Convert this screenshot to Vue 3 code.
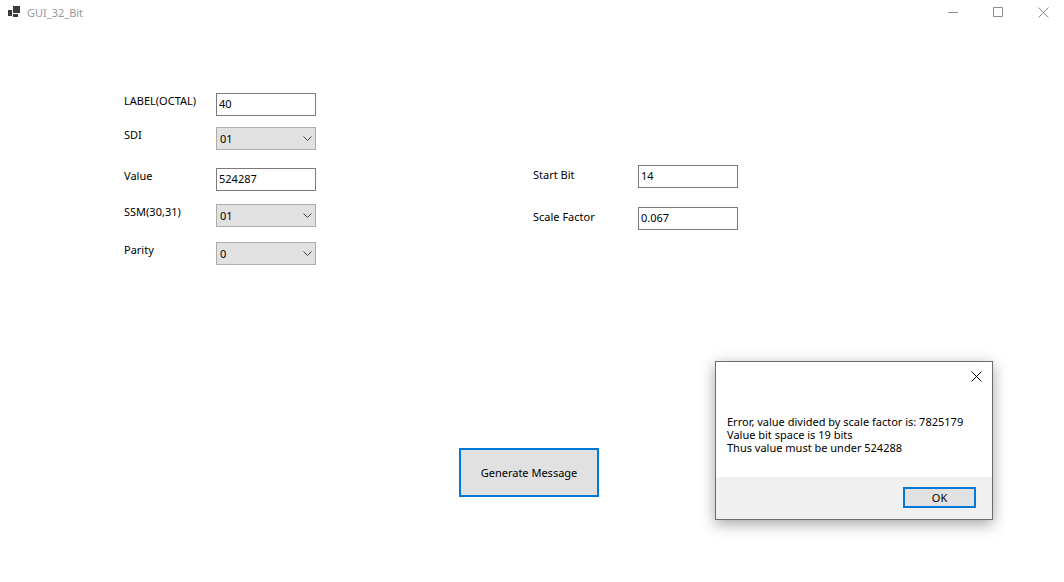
<script setup>
import { ref } from 'vue'

const fields = ref([
  { id: 'label', caption: 'LABEL(OCTAL)', value: '40' },
  { id: 'sdi', caption: 'SDI', value: '01', options: ['00', '01', '10', '11'] },
  { id: 'value', caption: 'Value', value: '524287' },
  { id: 'ssm', caption: 'SSM(30,31)', value: '01', options: ['00', '01', '10', '11'] },
  { id: 'parity', caption: 'Parity', value: '0', options: ['0', '1'] },
])

const scaling = ref([
  { id: 'start', caption: 'Start Bit', value: '14' },
  { id: 'scale', caption: 'Scale Factor', value: '0.067' },
])

const dialogOpen = ref(true)
</script>

<template>
  <div class="window">
    <header class="titlebar">
      <svg class="app-icon" width="13" height="13" viewBox="0 0 13 13" aria-hidden="true">
        <path d="M5 0h7v7H5zM0 4h4v6H0zM5 8h5v3H5z" fill="#3c3c3c" />
      </svg>
      <h1 class="title">GUI_32_Bit</h1>
      <div class="controls">
        <button type="button" class="control" aria-label="Minimize">
          <svg width="11" height="11" viewBox="0 0 11 11"><path d="M0 5.5h10" /></svg>
        </button>
        <button type="button" class="control" aria-label="Maximize">
          <svg width="11" height="11" viewBox="0 0 11 11"><path d="M.5.5h9v9h-9z" /></svg>
        </button>
        <button type="button" class="control" aria-label="Close">
          <svg width="11" height="11" viewBox="0 0 11 11"><path d="M.5.5l10 10M10.5.5l-10 10" /></svg>
        </button>
      </div>
    </header>

    <main class="content">
      <div class="groups">
        <div class="group message">
          <template v-for="field in fields" :key="field.id">
            <label :for="field.id">{{ field.caption }}</label>
            <div v-if="field.options" class="combo">
              <select :id="field.id" v-model="field.value">
                <option v-for="option in field.options" :key="option">{{ option }}</option>
              </select>
              <svg width="9" height="6" viewBox="0 0 9 6" aria-hidden="true"><path d="M.5.5l4 4 4-4" /></svg>
            </div>
            <input v-else :id="field.id" v-model="field.value" type="text" />
          </template>
        </div>
        <div class="group scaling">
          <template v-for="field in scaling" :key="field.id">
            <label :for="field.id">{{ field.caption }}</label>
            <input :id="field.id" v-model="field.value" type="text" />
          </template>
        </div>
      </div>
      <button type="button" class="generate" @click="dialogOpen = true">Generate Message</button>
    </main>

    <section v-if="dialogOpen" class="dialog" role="alertdialog" aria-describedby="error">
      <button type="button" class="dismiss" aria-label="Close" @click="dialogOpen = false">
        <svg width="11" height="11" viewBox="0 0 11 11"><path d="M.5.5l10 10M10.5.5l-10 10" /></svg>
      </button>
      <p id="error" class="error">
        Error, value divided by scale factor is: 7825179<br />
        Value bit space is 19 bits<br />
        Thus value must be under 524288
      </p>
      <footer class="actions">
        <button type="button" class="ok" @click="dialogOpen = false">OK</button>
      </footer>
    </section>
  </div>
</template>

<style>
body {
  background: #fff;
}
</style>

<style scoped>
.window {
  position: relative;
  box-sizing: border-box;
  min-height: 100vh;
  background: #fff;
  color: #000;
  font: 11px/15px "Noto Sans", "Open Sans", sans-serif;
}

.window * {
  box-sizing: border-box;
}

button,
input,
select {
  margin: 0;
  color: inherit;
  font: inherit;
  border-radius: 0;
  outline: none;
}

svg {
  display: block;
  fill: none;
}

.titlebar {
  display: flex;
  align-items: center;
  height: 25px;
  padding-left: 8px;
}

.title {
  margin: 0 0 0 6px;
  color: #999;
  font: inherit;
}

.controls {
  display: flex;
  gap: 4px;
  margin-left: auto;
}

.control {
  display: grid;
  place-items: center;
  width: 41px;
  height: 25px;
  padding: 0;
  border: 0;
  background: none;
  stroke: #8c8c8c;
}

.content {
  padding-right: 6px;
}

.groups {
  display: flex;
  align-items: flex-start;
  padding: 68px 0 0 124px;
}

.group {
  display: grid;
  align-items: start;
}

.message {
  grid-template-columns: 92px 100px;
  grid-template-rows: 34px 41px 36px 38px 23px;
}

.scaling {
  grid-template-columns: 105px 100px;
  grid-template-rows: 42px 23px;
  margin: 72px 0 0 217px;
}

.scaling label {
  padding-top: 2px;
}

input {
  width: 100%;
  height: 23px;
  padding: 0 2px 2px;
  border: 1px solid #7a7a7a;
  background: #fff;
}

.combo {
  display: grid;
  align-items: center;
}

.combo > * {
  grid-area: 1 / 1;
}

select {
  width: 100%;
  height: 23px;
  padding: 0 3px;
  border: 1px solid #adadad;
  background: #e1e1e1;
  appearance: none;
}

.combo svg {
  justify-self: end;
  margin-right: 4px;
  stroke: #444;
  pointer-events: none;
}

.generate {
  display: block;
  width: 140px;
  height: 49px;
  margin: 183px auto 0;
  padding: 0;
  border: 2px solid #0078d7;
  background: #e1e1e1;
}

.dialog {
  position: absolute;
  right: 71px;
  bottom: 62px;
  width: 278px;
  border: 1px solid #6b6e6c;
  background: #fff;
  box-shadow: 0 4px 14px rgba(0, 0, 0, 0.36);
  line-height: 13px;
}

.dismiss {
  display: grid;
  place-items: center;
  width: 31px;
  height: 29px;
  margin-left: auto;
  padding: 0;
  border: 0;
  background: none;
  stroke: #000;
}

.error {
  margin: 0;
  padding: 24px 11px 23px;
  white-space: nowrap;
}

.actions {
  display: flex;
  justify-content: flex-end;
  padding: 10px 16px 11px;
  background: #f0f0f0;
}

.ok {
  width: 73px;
  height: 21px;
  padding: 0;
  border: 2px solid #0078d7;
  background: #e1e1e1;
}
</style>
